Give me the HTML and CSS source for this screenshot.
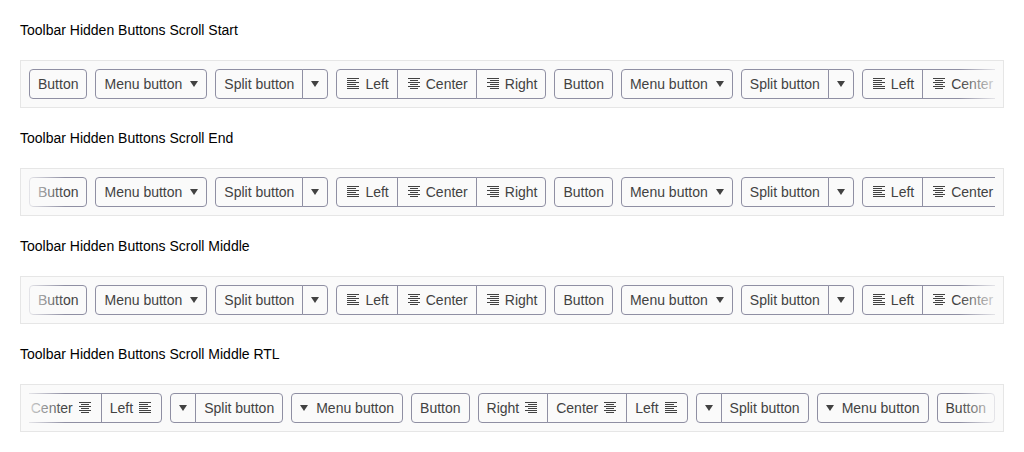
FILE: index.html
```
<!DOCTYPE html>
<html lang="en">
<head>
<meta charset="utf-8">
<title>Toolbar Hidden Buttons Scroll</title>
<link rel="stylesheet" href="styles.css">
</head>
<body>
<svg class="sprite" aria-hidden="true">
  <symbol id="left" viewBox="0 0 16 16"><path d="M2 2h12v1H2zM2 4h9v1H2zM2 6h12v1H2zM2 8h9v1H2zM2 10h12v1H2zM2 12h12v1H2z"/></symbol>
  <symbol id="center" viewBox="0 0 16 16"><path d="M2 2h12v1H2zM4 4h8v1H4zM2 6h12v1H2zM4 8h8v1H4zM2 10h12v1H2zM4 12h8v1H4z"/></symbol>
  <symbol id="right" viewBox="0 0 16 16"><path d="M2 2h12v1H2zM5 4h9v1H5zM2 6h12v1H2zM5 8h9v1H5zM2 10h12v1H2zM5 12h9v1H5z"/></symbol>
  <symbol id="down" viewBox="0 0 8 6"><path d="M0 0h8L4 6z"/></symbol>
</svg>
<main class="examples"></main>
<template id="items">
  <button class="button">Button</button>
  <button class="button">Menu button<svg class="caret"><use href="#down"/></svg></button>
  <div class="group">
    <button class="button">Split button</button>
    <button class="button" aria-label="More options"><svg class="caret"><use href="#down"/></svg></button>
  </div>
  <div class="group">
    <button class="button"><svg class="icon"><use href="#left"/></svg>Left</button>
    <button class="button"><svg class="icon"><use href="#center"/></svg>Center</button>
    <button class="button"><svg class="icon"><use href="#right"/></svg>Right</button>
  </div>
</template>
<script src="toolbar.js"></script>
</body>
</html>
```
FILE: styles.css
```
body {
  margin: 0;
  background: #fff;
  color: #000;
  font: 14px/20px "Liberation Sans", Arial, sans-serif;
}
.sprite { position: absolute; width: 0; height: 0; }
.examples {
  display: grid;
  grid-template-columns: minmax(0, 1fr);
  gap: 20px;
  padding: 20px;
}
.example {
  display: grid;
  grid-template-columns: minmax(0, 1fr);
  gap: 20px;
}
.title { margin: 0; font-size: 14px; font-weight: 400; }
.toolbar {
  padding: 8px;
  border: 1px solid #e6e6e6;
  background: #fafafa;
}
.scroller { position: relative; display: flex; gap: 8px; overflow: hidden; }
.fade-start::before,
.fade-end::after {
  content: "";
  position: absolute;
  top: 0;
  bottom: 0;
  width: 36px;
  z-index: 1;
  pointer-events: none;
  background: linear-gradient(to right, rgb(250 250 250 / 80%), rgb(250 250 250 / 0%));
}
.fade-start::before { inset-inline-start: 0; }
.fade-end::after { inset-inline-end: 0; }
[dir="ltr"] .fade-end::after,
[dir="rtl"] .fade-start::before {
  background: linear-gradient(to left, rgb(250 250 250 / 80%), rgb(250 250 250 / 0%));
}
.group { display: flex; flex: none; }
.button {
  display: flex;
  flex: none;
  align-items: center;
  justify-content: center;
  gap: 8px;
  padding: 4px 8px;
  border: 1px solid #8f8fa3;
  border-radius: 4px;
  background: #fafafa;
  color: #424242;
  font: inherit;
  white-space: nowrap;
}
.button:has(.icon) { gap: 4px; }
.group .button + .button { margin-inline-start: -1px; }
.group .button:not(:first-child) { border-start-start-radius: 0; border-end-start-radius: 0; }
.group .button:not(:last-child) { border-start-end-radius: 0; border-end-end-radius: 0; }
.icon { width: 16px; height: 16px; fill: currentColor; }
.caret { width: 8px; height: 6px; fill: currentColor; }
```
FILE: toolbar.js
```
const examples = [
  ["Start", "fade-end", "ltr"],
  ["End", "fade-start", "ltr"],
  ["Middle", "fade-start fade-end", "ltr"],
  ["Middle RTL", "fade-start fade-end", "rtl"],
];
const items = document.getElementById("items");
for (const [name, fades, dir] of examples) {
  const section = document.createElement("section");
  section.className = "example";
  section.innerHTML = `<h2 class="title">Toolbar Hidden Buttons Scroll ${name}</h2>
    <div class="toolbar" role="toolbar" dir="${dir}"><div class="scroller ${fades}"></div></div>`;
  const scroller = section.querySelector(".scroller");
  scroller.append(items.content.cloneNode(true), items.content.cloneNode(true));
  document.querySelector(".examples").append(section);
}
```
